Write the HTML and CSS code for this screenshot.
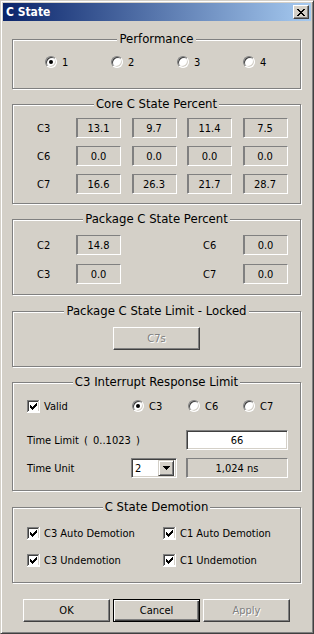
FILE: index.html
```html
<!DOCTYPE html>
<html lang="en">
<head>
  <meta charset="UTF-8" />
  <title>C State</title>
  <link rel="stylesheet" href="styles.css">
</head>
<body>
  <div class="window">
    <div class="titlebar">
      <span class="title">C State</span>
      <span class="close-btn">
        <svg width="8" height="7" viewBox="0 0 8 7"><path d="M0 0h2v1H0zM6 0h2v1H6zM1 1h2v1H1zM5 1h2v1H5zM2 2h4v1H2zM3 3h2v1H3zM2 4h4v1H2zM1 5h2v1H1zM5 5h2v1H5zM0 6h2v1H0zM6 6h2v1H6z" fill="#000"/></svg>
      </span>
    </div>

    <div class="dialog">
      <section class="group group-perf">
        <h2 class="group-title">Performance</h2>
        <div class="perf-options">
          <label class="option"><span class="radio checked"></span>1</label>
          <label class="option"><span class="radio"></span>2</label>
          <label class="option"><span class="radio"></span>3</label>
          <label class="option"><span class="radio"></span>4</label>
        </div>
      </section>

      <section class="group group-core">
        <h2 class="group-title">Core C State Percent</h2>
        <div class="core-grid">
          <span class="label">C3</span>
          <span class="value">13.1</span>
          <span class="value">9.7</span>
          <span class="value">11.4</span>
          <span class="value">7.5</span>
          <span class="label">C6</span>
          <span class="value">0.0</span>
          <span class="value">0.0</span>
          <span class="value">0.0</span>
          <span class="value">0.0</span>
          <span class="label">C7</span>
          <span class="value">16.6</span>
          <span class="value">26.3</span>
          <span class="value">21.7</span>
          <span class="value">28.7</span>
        </div>
      </section>

      <section class="group group-pkg">
        <h2 class="group-title">Package C State Percent</h2>
        <div class="pkg-grid">
          <span class="label">C2</span>
          <span class="value">14.8</span>
          <span class="label">C6</span>
          <span class="value">0.0</span>
          <span class="label">C3</span>
          <span class="value">0.0</span>
          <span class="label">C7</span>
          <span class="value">0.0</span>
        </div>
      </section>

      <section class="group group-limit">
        <h2 class="group-title">Package C State Limit - Locked</h2>
        <div class="btn limit-btn disabled">C7s</div>
      </section>

      <section class="group group-irl">
        <h2 class="group-title">C3 Interrupt Response Limit</h2>
        <div class="irl-top">
          <label class="option">
            <svg class="checkbox" width="13" height="13" viewBox="0 0 13 13"><rect width="13" height="13" fill="#fff"/><path d="M0 0h12v1H1v11H0z" fill="#808080"/><path d="M1 1h10v1H2v9H1z" fill="#404040"/><path d="M1 11h11V1h-1v10H1z" fill="#d4d0c8"/><path d="M3 5h1v3H3zM4 6h1v3H4zM5 7h1v3H5zM6 6h1v3H6zM7 5h1v3H7zM8 4h1v3H8zM9 3h1v3H9z" fill="#000"/></svg>
            Valid
          </label>
          <label class="option"><span class="radio checked"></span>C3</label>
          <label class="option"><span class="radio"></span>C6</label>
          <label class="option"><span class="radio"></span>C7</label>
        </div>
        <div class="irl-row irl-limit">
          <span class="label">Time Limit<span class="range"> ( 0..1023 )</span></span>
          <span class="field">66</span>
        </div>
        <div class="irl-row irl-unit">
          <span class="label">Time Unit</span>
          <span class="select">
            <span class="select-text">2</span>
            <span class="select-btn">
              <svg width="7" height="4" viewBox="0 0 7 4"><path d="M0 0h7v1H6v1H5v1H4v1H3V3H2V2H1V1H0z" fill="#000"/></svg>
            </span>
          </span>
          <span class="value wide">1,024 ns</span>
        </div>
      </section>

      <section class="group group-demotion">
        <h2 class="group-title">C State Demotion</h2>
        <div class="demotion-grid">
          <label class="option">
            <svg class="checkbox" width="13" height="13" viewBox="0 0 13 13"><rect width="13" height="13" fill="#fff"/><path d="M0 0h12v1H1v11H0z" fill="#808080"/><path d="M1 1h10v1H2v9H1z" fill="#404040"/><path d="M1 11h11V1h-1v10H1z" fill="#d4d0c8"/><path d="M3 5h1v3H3zM4 6h1v3H4zM5 7h1v3H5zM6 6h1v3H6zM7 5h1v3H7zM8 4h1v3H8zM9 3h1v3H9z" fill="#000"/></svg>
            C3 Auto Demotion
          </label>
          <label class="option">
            <svg class="checkbox" width="13" height="13" viewBox="0 0 13 13"><rect width="13" height="13" fill="#fff"/><path d="M0 0h12v1H1v11H0z" fill="#808080"/><path d="M1 1h10v1H2v9H1z" fill="#404040"/><path d="M1 11h11V1h-1v10H1z" fill="#d4d0c8"/><path d="M3 5h1v3H3zM4 6h1v3H4zM5 7h1v3H5zM6 6h1v3H6zM7 5h1v3H7zM8 4h1v3H8zM9 3h1v3H9z" fill="#000"/></svg>
            C1 Auto Demotion
          </label>
          <label class="option">
            <svg class="checkbox" width="13" height="13" viewBox="0 0 13 13"><rect width="13" height="13" fill="#fff"/><path d="M0 0h12v1H1v11H0z" fill="#808080"/><path d="M1 1h10v1H2v9H1z" fill="#404040"/><path d="M1 11h11V1h-1v10H1z" fill="#d4d0c8"/><path d="M3 5h1v3H3zM4 6h1v3H4zM5 7h1v3H5zM6 6h1v3H6zM7 5h1v3H7zM8 4h1v3H8zM9 3h1v3H9z" fill="#000"/></svg>
            C3 Undemotion
          </label>
          <label class="option">
            <svg class="checkbox" width="13" height="13" viewBox="0 0 13 13"><rect width="13" height="13" fill="#fff"/><path d="M0 0h12v1H1v11H0z" fill="#808080"/><path d="M1 1h10v1H2v9H1z" fill="#404040"/><path d="M1 11h11V1h-1v10H1z" fill="#d4d0c8"/><path d="M3 5h1v3H3zM4 6h1v3H4zM5 7h1v3H5zM6 6h1v3H6zM7 5h1v3H7zM8 4h1v3H8zM9 3h1v3H9z" fill="#000"/></svg>
            C1 Undemotion
          </label>
        </div>
      </section>

      <div class="buttons">
        <div class="btn">OK</div>
        <div class="btn default">Cancel</div>
        <div class="btn disabled">Apply</div>
      </div>
    </div>
  </div>
</body>
</html>
```

FILE: styles.css
```css
* {
  box-sizing: border-box;
}
html, body {
  margin: 0;
  background: #d4d0c8;
}
body {
  font-family: Tahoma, "DejaVu Sans Condensed", "Liberation Sans", sans-serif;
  font-size: 11px;
  color: #000;
}
.window {
  width: 314px;
  height: 634px;
  background: #d4d0c8;
  border: 1px solid;
  border-color: #d4d0c8 #404040 #404040 #d4d0c8;
  box-shadow: inset 1px 1px 0 #fff, inset -1px -1px 0 #808080;
  padding: 2px;
}
.titlebar {
  height: 18px;
  display: flex;
  align-items: center;
  padding: 0 2px;
  background: linear-gradient(to right, #0a246a, #a6caf0);
  color: #fff;
  font-size: 12px;
  font-weight: bold;
}
.title {
  padding-left: 1px;
}
.close-btn {
  margin-left: auto;
  width: 16px;
  height: 14px;
  display: flex;
  align-items: center;
  justify-content: center;
  background: #d4d0c8;
  border: 1px solid;
  border-color: #fff #404040 #404040 #fff;
  box-shadow: inset -1px -1px 0 #808080;
}
.close-btn svg {
  display: block;
}
.dialog {
  padding: 18px 10px 0 9px;
}
.group {
  border: 1px solid #808080;
  box-shadow: inset 1px 1px 0 #fff, 1px 1px 0 #fff;
}
.group + .group {
  margin-top: 15px;
}
.group-pkg + .group-limit,
.group-irl + .group-demotion {
  margin-top: 16px;
}
.group-title {
  width: fit-content;
  margin: -8px auto 0;
  padding: 0 2px;
  background: #d4d0c8;
  font-size: 13px;
  font-weight: normal;
  line-height: 14px;
}
.option {
  display: flex;
  align-items: center;
  gap: 5px;
  height: 16px;
  white-space: nowrap;
}
.radio {
  flex: none;
  width: 12px;
  height: 12px;
  border-radius: 50%;
  background: #fff;
  border: 1px solid;
  border-color: #808080 #fff #fff #808080;
  box-shadow: inset 1px 1px 0 #404040, inset -1px -1px 0 #d4d0c8;
  display: flex;
  align-items: center;
  justify-content: center;
}
.radio.checked::after {
  content: "";
  width: 4px;
  height: 4px;
  border-radius: 50%;
  background: #000;
}
.checkbox {
  flex: none;
  display: block;
  margin-right: -1px;
}
.value {
  width: 45px;
  height: 20px;
  display: flex;
  align-items: center;
  justify-content: center;
  border: 1px solid;
  border-color: #808080 #fff #fff #808080;
  box-shadow: inset 1px 0 0 #808080;
}
.value.wide {
  width: 102px;
}

/* performance */
.perf-options {
  display: grid;
  grid-template-columns: repeat(4, 66px);
  margin: 8px 0 18px 32px;
}

/* core / package percents */
.core-grid {
  display: grid;
  grid-template-columns: 39px repeat(4, 55.5px);
  grid-auto-rows: 20px;
  row-gap: 8px;
  align-items: center;
  margin: 7px 0 9px 24px;
}
.pkg-grid {
  display: grid;
  grid-template-columns: 39px 127px 40px 45px;
  grid-auto-rows: 20px;
  row-gap: 9px;
  align-items: center;
  margin: 9px 0 10px 24px;
}

/* buttons */
.btn {
  width: 87px;
  height: 23px;
  display: flex;
  align-items: center;
  justify-content: center;
  background: #d4d0c8;
  border: 1px solid;
  border-color: #fff #404040 #404040 #fff;
  box-shadow: inset -1px -1px 0 #808080;
}
.btn.default {
  border-color: #000;
  box-shadow: inset 1px 1px 0 #fff, inset -1px -1px 0 #404040, inset -2px -2px 0 #808080;
}
.btn.disabled {
  color: #808080;
  text-shadow: 1px 1px 0 #fff;
}
.limit-btn {
  margin: 9px auto 16px;
}

/* interrupt response */
.irl-top {
  display: grid;
  grid-template-columns: 105px 56px 55px auto;
  margin: 9px 0 0 14px;
}
.irl-row {
  display: flex;
  align-items: center;
  height: 20px;
  margin-left: 14px;
}
.irl-limit {
  margin-top: 16px;
}
.irl-limit .label {
  width: 159px;
  white-space: pre;
}
.range {
  word-spacing: 2px;
}
.irl-unit {
  margin-top: 8px;
  margin-bottom: 12px;
}
.irl-unit .label {
  width: 104px;
}
.field {
  width: 102px;
  height: 20px;
  display: flex;
  align-items: center;
  justify-content: center;
  background: #fff;
  border: 1px solid;
  border-color: #808080 #fff #fff #808080;
  box-shadow: inset 1px 1px 0 #404040, inset -1px -1px 0 #d4d0c8;
}
.select {
  width: 46px;
  height: 20px;
  margin-right: 9px;
  display: flex;
  align-items: center;
  padding: 2px;
  background: #fff;
  border: 1px solid;
  border-color: #808080 #fff #fff #808080;
  box-shadow: inset 1px 1px 0 #404040, inset -1px -1px 0 #d4d0c8;
}
.select-text {
  padding-left: 1px;
}
.select-btn {
  margin-left: auto;
  width: 16px;
  height: 16px;
  display: flex;
  align-items: center;
  justify-content: center;
  background: #d4d0c8;
  border: 1px solid;
  border-color: #d4d0c8 #404040 #404040 #d4d0c8;
  box-shadow: inset 1px 1px 0 #fff, inset -1px -1px 0 #808080;
}
.select-btn svg {
  display: block;
}

/* demotion */
.demotion-grid {
  display: grid;
  grid-template-columns: 136px auto;
  row-gap: 11px;
  margin: 11px 0 14px 14px;
}

.buttons {
  display: flex;
  gap: 3px;
  margin: 16px 0 0 11px;
}
```
